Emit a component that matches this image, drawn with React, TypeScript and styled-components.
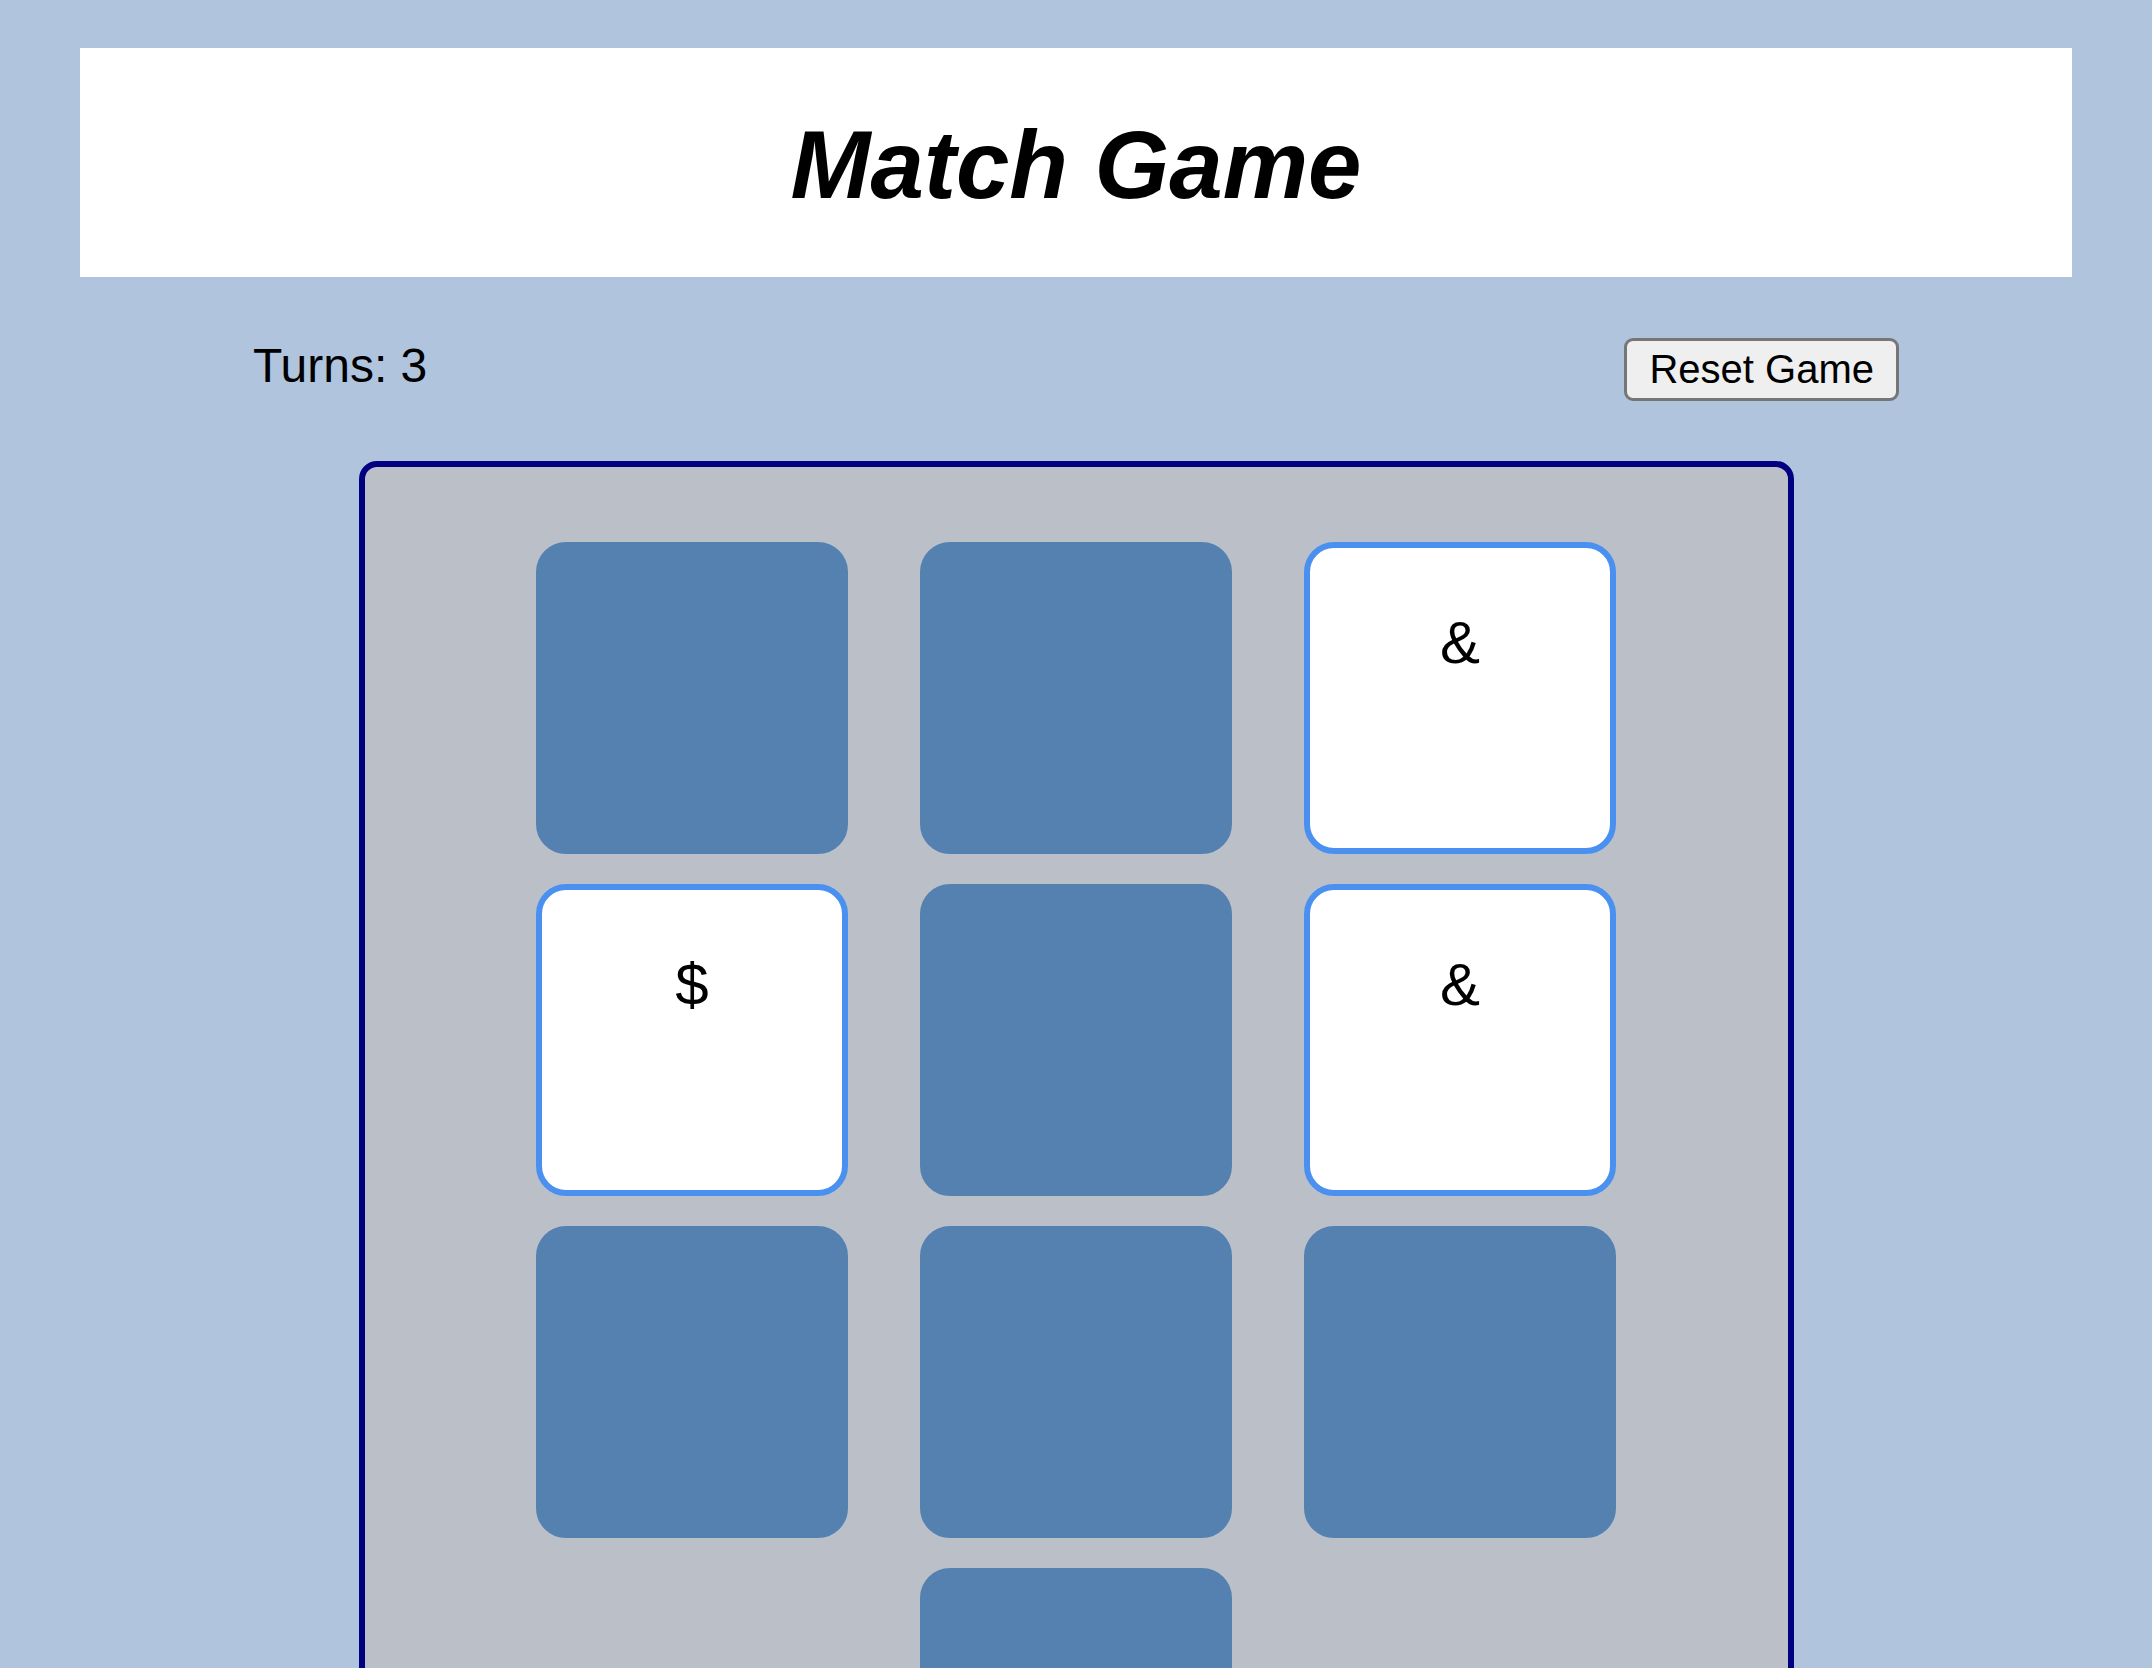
import React, {useState} from 'react'
import styled, {createGlobalStyle} from 'styled-components'

type CardType = {
  id: number
  symbol: string
  flipped: boolean
}

const initialCards: CardType[] = [
  {id: 0, symbol: '$', flipped: false},
  {id: 1, symbol: '%', flipped: false},
  {id: 2, symbol: '&', flipped: true},
  {id: 3, symbol: '$', flipped: true},
  {id: 4, symbol: '#', flipped: false},
  {id: 5, symbol: '&', flipped: true},
  {id: 6, symbol: '#', flipped: false},
  {id: 7, symbol: '@', flipped: false},
  {id: 8, symbol: '%', flipped: false},
  {id: 9, symbol: '@', flipped: false},
]

export default function App() {
  const [cards, setCards] = useState<CardType[]>(initialCards)
  const [turns, setTurns] = useState(3)

  const flipHandler = (id: number) => {
    setCards(cards.map(c => c.id === id ? {...c, flipped: !c.flipped} : c))
    setTurns(turns + 1)
  }

  const resetHandler = () => {
    setCards(initialCards.map(c => ({...c, flipped: false})))
    setTurns(0)
  }

  return <>
    <GlobalStyle/>
    <Header>
      <Title>Match Game</Title>
    </Header>
    <Controls>
      <Turns>Turns: {turns}</Turns>
      <ResetButton type='button' onClick={resetHandler}>Reset Game</ResetButton>
    </Controls>
    <Board>
      {
        cards.map(card => <Card
          key={card.id}
          $flipped={card.flipped}
          onClick={() => flipHandler(card.id)}
        >
          {card.flipped ? <Symbol>{card.symbol}</Symbol> : null}
        </Card>)
      }
    </Board>
  </>
}

const GlobalStyle = createGlobalStyle`
  body {
    margin: 0;
    background: #b0c4de;
    font-family: "Liberation Sans", Arial, sans-serif;
    color: #000;
  }
`

const Header = styled.header`
  margin: 48px 80px 0;
  padding: 62px 0 57px;
  background: #fff;
  text-align: center;
`

const Title = styled.h1`
  margin: 0;
  font-size: 96px;
  line-height: 110px;
  font-weight: bold;
  font-style: italic;
`

const Controls = styled.div`
  display: flex;
  justify-content: space-between;
  align-items: flex-start;
  margin-top: 61px;
  padding: 0 253px;
`

const Turns = styled.p`
  margin: 0;
  font-size: 48px;
  line-height: 55px;
`

const ResetButton = styled.button`
  height: 63px;
  padding: 0 22px;
  font-family: "Liberation Sans", Arial, sans-serif;
  font-size: 40px;
  color: #000;
  background: #efefef;
  border: 3px solid #767676;
  border-radius: 9px;
  cursor: pointer;
`

const Board = styled.div`
  box-sizing: border-box;
  width: 1435px;
  margin: 60px auto 0;
  padding: 75px 171px 60px;
  display: flex;
  flex-wrap: wrap;
  justify-content: center;
  gap: 30px 72px;
  background: #bbc0c8;
  border: 6px solid #000080;
  border-radius: 18px;
`

const Card = styled.div<{ $flipped: boolean }>`
  box-sizing: border-box;
  width: 312px;
  height: 312px;
  border-radius: 30px;
  background: ${p => p.$flipped ? '#fff' : '#5581b0'};
  border: 6px solid ${p => p.$flipped ? '#4a90f0' : '#5581b0'};
  text-align: center;
  cursor: pointer;
`

const Symbol = styled.p`
  margin: 60px 0 0;
  font-size: 60px;
  line-height: 69px;
`
